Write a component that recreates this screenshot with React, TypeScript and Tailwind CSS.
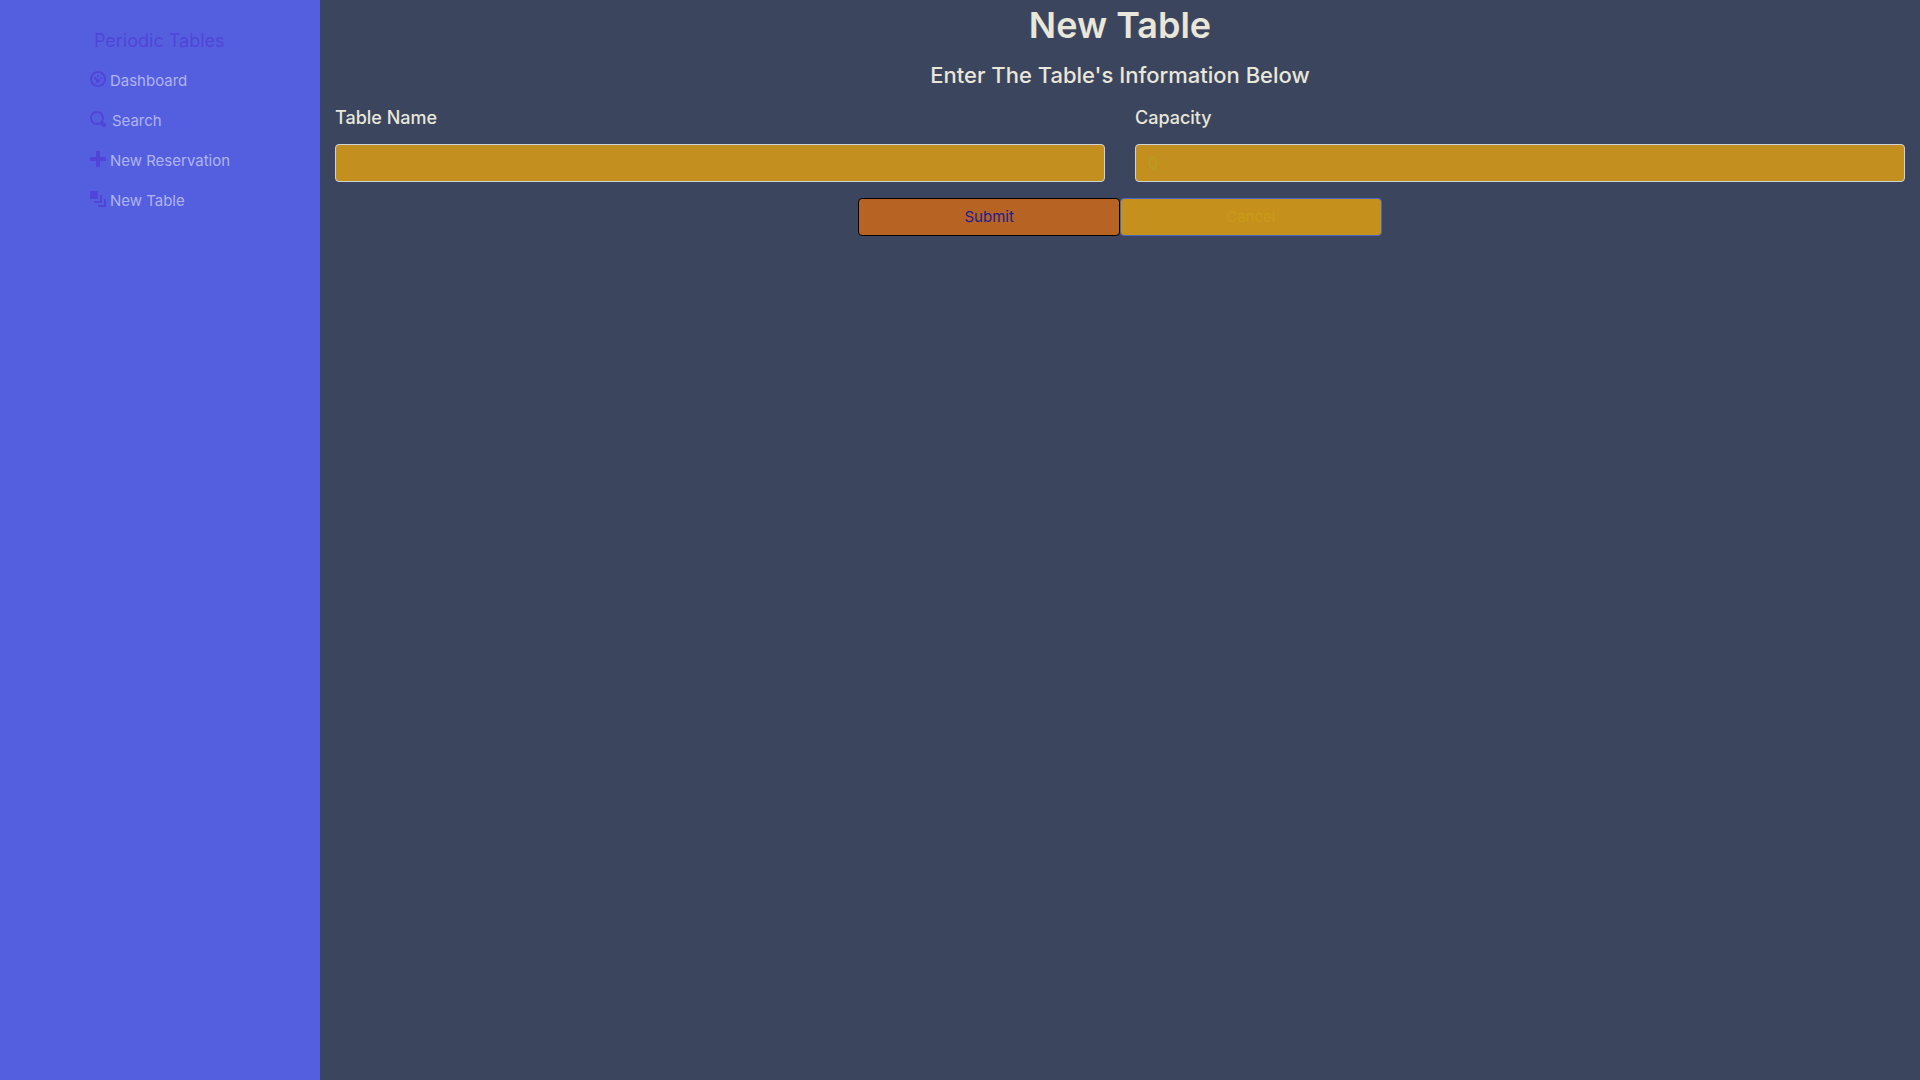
type IconProps = { path: string };

const links = [
  {
    label: "Dashboard",
    gap: "gap-1",
    path: "M4 0c-2.2 0-4 1.8-4 4s1.8 4 4 4 4-1.8 4-4-1.8-4-4-4zm0 1c1.66 0 3 1.34 3 3s-1.34 3-3 3-3-1.34-3-3 1.34-3 3-3zm0 1c-.28 0-.5.22-.5.5s.22.5.5.5.5-.22.5-.5-.22-.5-.5-.5zm-1.66 1a.5.5 0 0 0-.19.84l.91.91c-.02.08-.06.16-.06.25 0 .55.45 1 1 1s1-.45 1-1-.45-1-1-1c-.09 0-.17.04-.25.06l-.91-.91a.5.5 0 0 0-.44-.16.5.5 0 0 0-.06 0zm3.16 0c-.28 0-.5.22-.5.5s.22.5.5.5.5-.22.5-.5-.22-.5-.5-.5z",
  },
  {
    label: "Search",
    gap: "gap-1.5",
    path: "M3.5 0c-1.93 0-3.5 1.57-3.5 3.5s1.57 3.5 3.5 3.5c.59 0 1.17-.14 1.66-.41a1 1 0 0 0 .13.13l1 1a1.02 1.02 0 1 0 1.44-1.44l-1-1a1 1 0 0 0-.16-.13c.27-.49.44-1.06.44-1.66 0-1.93-1.55-3.5-3.5-3.5zm0 1c1.39 0 2.5 1.11 2.5 2.5 0 .66-.24 1.27-.66 1.72-.01.01-.02.02-.03.03a1 1 0 0 0-.13.13c-.44.4-1.04.63-1.69.63-1.39 0-2.5-1.11-2.5-2.5s1.11-2.5 2.5-2.5z",
  },
  {
    label: "New Reservation",
    gap: "gap-1",
    path: "M3 0v3h-3v2h3v3h2v-3h3v-2h-3v-3h-2z",
  },
  {
    label: "New Table",
    gap: "gap-1",
    path: "M0 0v4h4v-4h-4zm5 2v3h-3v1h4v-4h-1zm2 2v3h-3v1h4v-4h-1z",
  },
];

function Icon({ path }: IconProps) {
  return (
    <svg viewBox="0 0 8 8" className="mb-1 size-4 shrink-0 fill-[#5045d8]" aria-hidden="true">
      <path d={path} />
    </svg>
  );
}

function Sidebar() {
  return (
    <nav className="flex w-1/6 shrink-0 justify-center bg-[#545fdf] pt-[21px]">
      <div>
        <a href="#home" className="flex h-10 items-center px-1 text-lg text-[#5045d8]">
          Periodic Tables
        </a>
        <ul>
          {links.map((link) => (
            <li key={link.label}>
              <a href="#page" className={`flex h-10 items-center text-[15px] text-[#afb3ee] ${link.gap}`}>
                <Icon path={link.path} />
                {link.label}
              </a>
            </li>
          ))}
        </ul>
      </div>
    </nav>
  );
}

const inputClass =
  "h-[38px] w-full rounded border border-[#ced4da] bg-[#c39020] px-3 text-[#b5a01a] outline-none";

export default function App() {
  return (
    <div className="flex min-h-screen bg-[#3b455d] font-['Inter',sans-serif] text-[#e9e6da]">
      <Sidebar />
      <main className="min-w-0 flex-1 px-[15px]">
        <h1 className="text-center text-4xl leading-[50px] font-semibold">New Table</h1>
        <h2 className="mt-2 text-center text-[22px] leading-[34px] font-medium">
          Enter The Table's Information Below
        </h2>
        <form>
          <div className="mt-2.5 grid grid-cols-2 gap-[30px]">
            <div>
              <label htmlFor="table_name" className="block h-[42px] text-lg leading-8 font-medium">
                Table Name
              </label>
              <input id="table_name" type="text" className={inputClass} />
            </div>
            <div>
              <label htmlFor="capacity" className="block h-[42px] text-lg leading-8 font-medium">
                Capacity
              </label>
              <input id="capacity" type="text" inputMode="numeric" defaultValue="0" className={inputClass} />
            </div>
          </div>
          <div className="mt-4 flex justify-center text-[15px]">
            <button type="submit" className="h-[38px] w-1/6 rounded border border-black bg-[#b76323] text-[#1c1c94]">
              Submit
            </button>
            <button type="button" className="h-[38px] w-1/6 rounded border border-[#4466c4] bg-[#c5901c] text-[#c89b18]">
              Cancel
            </button>
          </div>
        </form>
      </main>
    </div>
  );
}
